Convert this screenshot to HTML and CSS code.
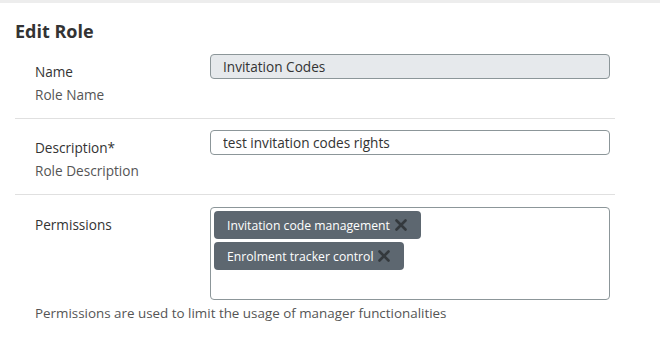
FILE: index.html
```html
<!DOCTYPE html>
<html lang="en">
<head>
    <meta charset="UTF-8">
    <meta name="viewport" content="width=device-width, initial-scale=1.0">
    <title>Edit Role</title>
    <link rel="stylesheet" href="styles.css">
</head>
<body>

    <div class="top-bar"></div>

    <div class="panel">
        <h2>Edit Role</h2>

        <div class="row">
            <div class="label-col">
                <label for="roleName">Name</label>
                <span class="hint">Role Name</span>
            </div>
            <div class="field-col">
                <input type="text" id="roleName" class="field" value="Invitation Codes" readonly>
            </div>
        </div>

        <div class="row">
            <div class="label-col">
                <label for="roleDesc">Description*</label>
                <span class="hint">Role Description</span>
            </div>
            <div class="field-col">
                <input type="text" id="roleDesc" class="field" value="test invitation codes rights">
            </div>
        </div>

        <div class="row last">
            <div class="label-col">
                <label>Permissions</label>
            </div>
            <div class="field-col">
                <div class="tag-box">
                    <span class="tag">Invitation code management
                        <svg class="remove" width="12" height="12" viewBox="0 0 12 12"><path d="M1.5 1.5 10.5 10.5 M10.5 1.5 1.5 10.5" stroke="#34393d" stroke-width="2.6" stroke-linecap="round"/></svg>
                    </span>
                    <span class="tag">Enrolment tracker control
                        <svg class="remove" width="12" height="12" viewBox="0 0 12 12"><path d="M1.5 1.5 10.5 10.5 M10.5 1.5 1.5 10.5" stroke="#34393d" stroke-width="2.6" stroke-linecap="round"/></svg>
                    </span>
                </div>
            </div>
        </div>

        <p class="note">Permissions are used to limit the usage of manager functionalities</p>
    </div>

</body>
</html>
```

FILE: styles.css
```css
body {
    margin: 0;
    font-family: "Open Sans", Arial, sans-serif;
    color: #333;
    background: #fff;
}

.top-bar {
    height: 3px;
    background-color: #ededed;
}

.panel {
    width: 600px;
    margin-left: 15px;
}

h2 {
    font-size: 18px;
    font-weight: 700;
    color: #333;
    margin: 0;
    padding-top: 16px;
    line-height: 24px;
}

.row {
    display: flex;
    padding: 11px 0 12px 20px;
    border-bottom: 1px solid #e0e0e0;
}

.row.last {
    border-bottom: none;
    padding-top: 12px;
    padding-bottom: 0;
}

.label-col {
    width: 175px;
    padding-top: 6px;
    display: flex;
    flex-direction: column;
    font-size: 13.6px;
    line-height: 23px;
}

.label-col label {
    color: #333;
}

.hint {
    color: #555;
}

.field-col {
    width: 400px;
}

.field {
    box-sizing: border-box;
    width: 400px;
    height: 25px;
    padding: 0 12px;
    font-family: "Open Sans", Arial, sans-serif;
    font-size: 13.6px;
    color: #333;
    border: 1px solid #8c9699;
    border-radius: 4px;
    background: #fff;
    outline: none;
}

.field[readonly] {
    background-color: #e6e9ec;
}

.tag-box {
    box-sizing: border-box;
    width: 400px;
    height: 93px;
    padding: 3px;
    border: 1px solid #8c9699;
    border-radius: 4px;
    display: flex;
    flex-direction: column;
    align-items: flex-start;
    gap: 3px;
}

.tag {
    display: inline-flex;
    align-items: center;
    height: 28px;
    padding: 0 14px 0 13px;
    background-color: #5d6770;
    color: #fff;
    font-size: 12.2px;
    border-radius: 4px;
}

.remove {
    margin-left: 5px;
}

.note {
    margin: 4px 0 0 20px;
    font-size: 13.4px;
    color: #555;
}
```
